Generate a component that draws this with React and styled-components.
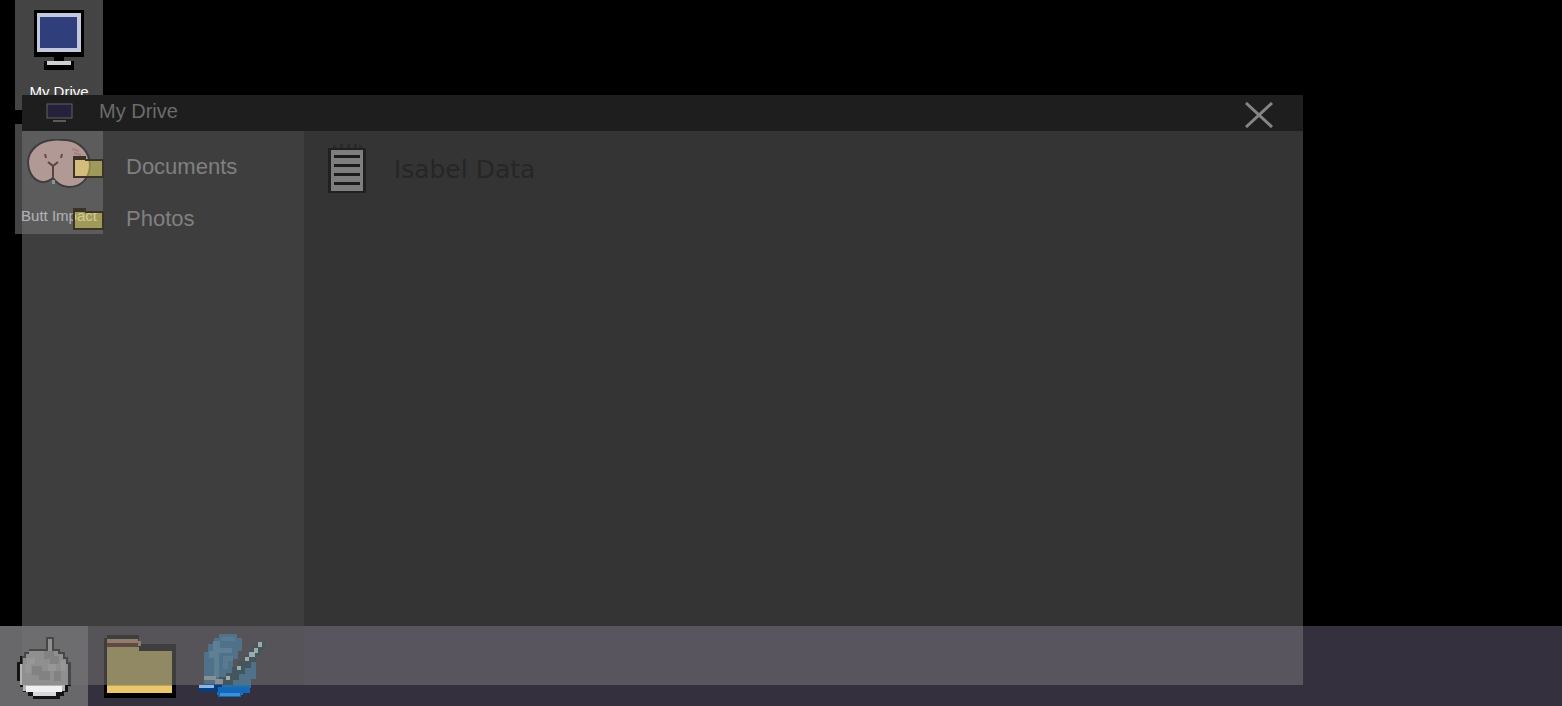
import React, { useState } from "react";
import styled, { createGlobalStyle } from "styled-components";

const GlobalStyle = createGlobalStyle`
  * {
    box-sizing: border-box;
  }

  body {
    margin: 0;
    background: #000;
    font-family: "Liberation Sans", Arial, sans-serif;
  }

  button {
    border: 0;
    padding: 0;
    background: none;
    font: inherit;
    color: inherit;
    cursor: pointer;
  }
`;

const Desktop = styled.main`
  position: relative;
  display: flex;
  flex-direction: column;
  min-height: 100vh;
  overflow: hidden;
`;

const Shortcuts = styled.div`
  flex: 1;
  display: flex;
  flex-direction: column;
  align-items: flex-start;
  gap: 14px;
  padding-left: 15px;
`;

const Shortcut = styled.button`
  display: flex;
  flex-direction: column;
  align-items: center;
  justify-content: space-between;
  width: 88px;
  height: 110px;
  padding: 10px 0 8px;
  background: #444;
`;

const ShortcutIcon = styled.span`
  display: flex;
  align-items: center;
  height: 60px;
`;

const ShortcutLabel = styled.span`
  color: #fff;
  font-size: 15px;
  line-height: 20px;
  white-space: nowrap;
`;

const Taskbar = styled.nav`
  display: flex;
  height: 80px;
  background: #35303d;
`;

const TaskButton = styled.button`
  display: flex;
  align-items: center;
  justify-content: center;
  width: ${props => (props.$start ? "88px" : "92px")};
  margin-right: ${props => (props.$start ? "6px" : "0")};
  background: ${props => (props.$start ? "#68676a" : "none")};
`;

const Window = styled.section`
  position: absolute;
  top: 95px;
  left: 22px;
  width: 82vw;
  height: calc(100vh - 116px);
  display: flex;
  flex-direction: column;
`;

const TitleBar = styled.header`
  display: flex;
  align-items: center;
  gap: 26px;
  height: 36px;
  padding: 0 30px 0 24px;
  background: #1e1e1e;
`;

const Title = styled.h1`
  flex: 1;
  margin: 0;
  padding-bottom: 4px;
  color: #6b6b6b;
  font-size: 20px;
  font-weight: 400;
  line-height: 32px;
`;

const CloseButton = styled.button`
  display: flex;
  padding-top: 4px;
`;

const WindowBody = styled.div`
  flex: 1;
  display: flex;
`;

const Sidebar = styled.aside`
  width: 22%;
  padding: 10px 0 0 51px;
  background: rgba(113, 113, 113, 0.55);
`;

const FolderRow = styled.button`
  display: flex;
  align-items: center;
  gap: 22px;
  height: 52px;
  color: #808080;
  font-size: 22px;
`;

const Content = styled.div`
  flex: 1;
  padding: 10px 24px;
  background: rgba(173, 173, 173, 0.3);
`;

const FileRow = styled.button`
  display: flex;
  align-items: center;
  gap: 28px;
  height: 56px;
  color: #262626;
  font-family: "DejaVu Sans", sans-serif;
  font-size: 25px;
`;

function MonitorIcon() {
  return (
    <svg width="50" height="60" viewBox="0 0 50 60" shapeRendering="crispEdges" aria-hidden="true">
      <path fill="#000" d="M0 0h50v47H30v4h10v9H10v-9h10v-4H0z" />
      <path fill="#c3c8dc" d="M3 3h44v39H3z" />
      <path fill="#cfcfcf" d="M13 51h24v4H13z" />
      <path fill="#303f7b" d="M6 7h37v31H6z" />
    </svg>
  );
}

function SmallMonitorIcon() {
  return (
    <svg width="27" height="20" viewBox="0 0 27 20" aria-hidden="true">
      <rect x="1" y="1" width="25" height="14" fill="#24223a" stroke="#606060" />
      <path fill="#5a5a5a" d="M7 17h13v2H7z" />
    </svg>
  );
}

function PeachIcon() {
  return (
    <svg width="64" height="50" viewBox="0 0 64 50" aria-hidden="true">
      <path
        fill="#ffc9c0"
        stroke="#000"
        strokeWidth="2"
        d="M25 1C13 2 2 10 1 22c0 12 6 20 14 21 5 1 8-2 11-4 4 5 8 9 16 9 12 0 20-8 21-21C63 12 52 2 39 1c-5 0-10-1-14 0z"
      />
      <path fill="none" stroke="#38100c" strokeWidth="2" d="M21 23l5 4 5-4M26 27v12" />
      <path fill="none" stroke="#5c201a" strokeWidth="2" d="M18 15l1 4M35 15l-1 4" />
      <path fill="none" stroke="#e89a90" strokeWidth="2" d="M45 10l7 2M47 14l7 2" />
      <path fill="#a9c4c4" d="M25 41h3v4h-3z" />
    </svg>
  );
}

function SmallFolderIcon() {
  return (
    <svg width="31" height="22" viewBox="0 0 31 22" shapeRendering="crispEdges" aria-hidden="true">
      <path fill="#3a3326" d="M0 0h13v3h18v19H0V0zm2 4v16h27V5H12V4z" fillRule="evenodd" />
      <path fill="#ffee5c" fillOpacity=".42" d="M2 4h10v1h17v15H2z" />
    </svg>
  );
}

function NoteIcon() {
  return (
    <svg width="38" height="50" viewBox="0 0 38 50" shapeRendering="crispEdges" aria-hidden="true">
      <path fill="#2a2a2a" d="M5 1h3v3H5zM12 0h3v4h-3zM19 0h3v4h-3zM26 0h3v4h-3zM31 1h3v3h-3z" />
      <path fill="#202020" d="M0 4h38v45H0z" />
      <path fill="#7e7e7e" d="M3 6h32v41H3z" />
      <path fill="#1c1c1c" d="M6 11h26v3H6zM6 20h26v3H6zM6 29h26v3H6zM6 38h26v3H6z" />
    </svg>
  );
}

function CloseIcon() {
  return (
    <svg width="28" height="26" viewBox="0 0 28 26" aria-hidden="true">
      <path fill="none" stroke="#858585" strokeWidth="3" d="M1 1l26 24M27 1L1 25" />
    </svg>
  );
}

function StartIcon() {
  return (
    <svg width="54" height="66" viewBox="0 0 54 66" shapeRendering="crispEdges" aria-hidden="true">
      <path fill="#141416" d="M12 16h17V4h8v12h6v3h5v5h3v5h3v24h-3v6h-4v4h-4v3H16v-3h-5v-4H6v-5H3v-6H0V29h3v-6h4v-4h5z" />
      <path fill="#b4b4b4" d="M12 18h19V6h4v12h6v3h5v5h3v5h2v21h-3v6H6v-6H3V31h3v-6h3v-4h3z" />
      <path fill="#989898" d="M27 18h10v5h5v8h-9v-5h-6zM15 33h10v5h8v9H22v-5h-7zM37 38h7v10h-7z" />
      <path fill="#c6c6c6" d="M10 25h8v6h-4v9H8v-8h2zM31 31h8v7h-8zM44 28h5v10h-5z" />
      <path fill="#f0f0f0" d="M9 53h36v6H9z" />
      <path fill="#d8d8d8" d="M16 59h23v4H16z" />
    </svg>
  );
}

function FolderIcon() {
  return (
    <svg width="72" height="63" viewBox="0 0 72 63" shapeRendering="crispEdges" aria-hidden="true">
      <path fill="#000" d="M3 0h32v9h37v54H0V3h3z" />
      <path fill="#b88a68" d="M3 4h31v4H3z" />
      <path fill="#48200f" d="M3 8h31v4H3z" />
      <path fill="#b88a68" d="M34 6h3v5h-3z" />
      <path fill="#b8a654" d="M3 12h32v4h33v36H3z" />
      <path fill="#eac66c" d="M3 51h65v7H3z" />
    </svg>
  );
}

function BrushIcon() {
  return (
    <svg width="66" height="64" viewBox="0 0 66 64" shapeRendering="crispEdges" aria-hidden="true">
      <path fill="#2672a8" d="M20 0h18v4h5v13h-4v8h-5v8h8v-6h6v-6h9v24h-5v9h-8v7H18v-8H5V18h4v-8h6V4h5z" />
      <path fill="#4a90c0" d="M14 7h7v7h12v5H20v24h-5V24h-5v-7h4z" />
      <path fill="#3f86b8" d="M22 3h14v4H22zM24 22h10v5h-5v8h-5z" />
      <path fill="#0c3648" d="M58 8h8v8h-4v6h-5v6h-5v6h-6v6h-6v6h-6v5H20v-8h7v-4h6v-6h6v-6h6v-6h5v-5h4v-5h4z" />
      <path fill="#d4f0ee" d="M59 8h4v5h-4zM55 14h4v5h-4zM50 18h6v5h-6zM46 23h4v4h-4zM38 32h4v4h-4zM27 42h4v4h-4z" />
      <path fill="#a8b4b8" d="M5 42h12v4H5zM16 45h8v5h-8z" />
      <path fill="#093c7d" d="M0 50h23v8H0z" />
      <path fill="#8cb6e4" d="M0 51h15v3H0z" />
      <path fill="#1468ba" d="M19 53h32v6h-9v4H19z" />
      <path fill="#3c90d8" d="M21 59h20v3H21z" />
    </svg>
  );
}

const folders = ["Documents", "Photos"];

const shortcuts = [
  { name: "My Drive", icon: <MonitorIcon /> },
  { name: "Butt Impact", icon: <PeachIcon /> }
];

export default function App() {
  const [open, setOpen] = useState(true);

  return (
    <Desktop>
      <GlobalStyle />
      <Shortcuts>
        {shortcuts.map(item => (
          <Shortcut key={item.name} onClick={() => setOpen(true)}>
            <ShortcutIcon>{item.icon}</ShortcutIcon>
            <ShortcutLabel>{item.name}</ShortcutLabel>
          </Shortcut>
        ))}
      </Shortcuts>
      <Taskbar>
        <TaskButton $start aria-label="Start">
          <StartIcon />
        </TaskButton>
        <TaskButton aria-label="Files" onClick={() => setOpen(true)}>
          <FolderIcon />
        </TaskButton>
        <TaskButton aria-label="Paint">
          <BrushIcon />
        </TaskButton>
      </Taskbar>
      {open && (
        <Window>
          <TitleBar>
            <SmallMonitorIcon />
            <Title>My Drive</Title>
            <CloseButton aria-label="Close" onClick={() => setOpen(false)}>
              <CloseIcon />
            </CloseButton>
          </TitleBar>
          <WindowBody>
            <Sidebar>
              {folders.map(name => (
                <FolderRow key={name}>
                  <SmallFolderIcon />
                  {name}
                </FolderRow>
              ))}
            </Sidebar>
            <Content>
              <FileRow>
                <NoteIcon />
                Isabel Data
              </FileRow>
            </Content>
          </WindowBody>
        </Window>
      )}
    </Desktop>
  );
}
